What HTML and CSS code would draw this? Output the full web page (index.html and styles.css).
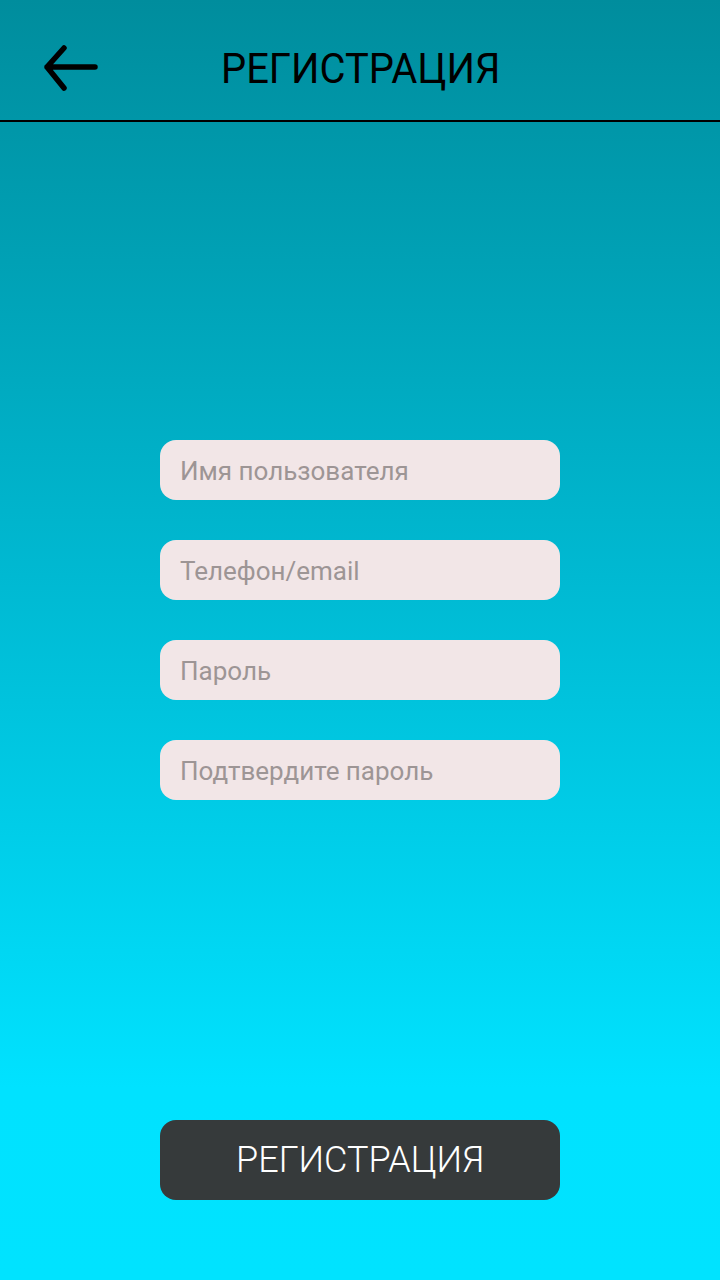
FILE: index.html
```html
<!DOCTYPE html>
<html lang="ru">
<head>
<meta charset="utf-8">
<link rel="stylesheet" href="styles.css">
</head>
<body>
<div class="screen">
  <header class="topbar">
    <button class="back" aria-label="Назад">
      <svg width="56" height="48" viewBox="0 0 56 48"><path d="M52 23H4M21 4L4 23L21 44" fill="none" stroke="#000" stroke-width="5.5" stroke-linecap="round" stroke-linejoin="round"/></svg>
    </button>
    <h1 class="title">РЕГИСТРАЦИЯ</h1>
  </header>
  <main class="content">
    <form class="form">
      <input class="field" type="text" placeholder="Имя пользователя">
      <input class="field" type="text" placeholder="Телефон/email">
      <input class="field" type="password" placeholder="Пароль">
      <input class="field" type="password" placeholder="Подтвердите пароль">
    </form>
    <button class="submit">РЕГИСТРАЦИЯ</button>
  </main>
</div>
</body>
</html>
```
FILE: styles.css
```css
* { box-sizing: border-box; }
html, body { margin: 0; padding: 0; }
body { font-family: Roboto, "Noto Sans", sans-serif; }
.screen {
  width: 720px;
  height: 1280px;
  display: flex;
  flex-direction: column;
  background: linear-gradient(to bottom, #008d9d 0%, #00b9d2 45%, #00e2ff 85%, #00e3ff 100%);
}
.topbar {
  height: 122px;
  border-bottom: 2px solid #000;
  display: flex;
  align-items: center;
  padding-left: 43px;
  padding-top: 16px;
}
.back {
  background: none;
  border: 0;
  padding: 0;
  width: 56px;
  height: 48px;
  display: flex;
}
.title {
  margin: 0 0 0 122px;
  font-weight: 400;
  font-size: 42px;
  color: #000;
  letter-spacing: 0;
  transform: scaleX(0.95);
  transform-origin: left center;
}
.content {
  flex: 1;
  display: flex;
  flex-direction: column;
  align-items: center;
  padding-top: 318px;
}
.form {
  display: flex;
  flex-direction: column;
  gap: 40px;
}
.field {
  width: 400px;
  height: 60px;
  border: 0;
  border-radius: 16px;
  background: #f2e6e7;
  padding: 2px 20px 0;
  font-family: Roboto, sans-serif;
  font-size: 26px;
  color: #333;
  outline: none;
}
.field::placeholder { color: #9d9595; }
.submit {
  margin-top: 320px;
  width: 400px;
  height: 80px;
  border: 0;
  border-radius: 16px;
  background: #363a3b;
  color: #fff;
  font-family: Roboto, sans-serif;
  font-weight: 300;
  font-size: 36px;
}
```
